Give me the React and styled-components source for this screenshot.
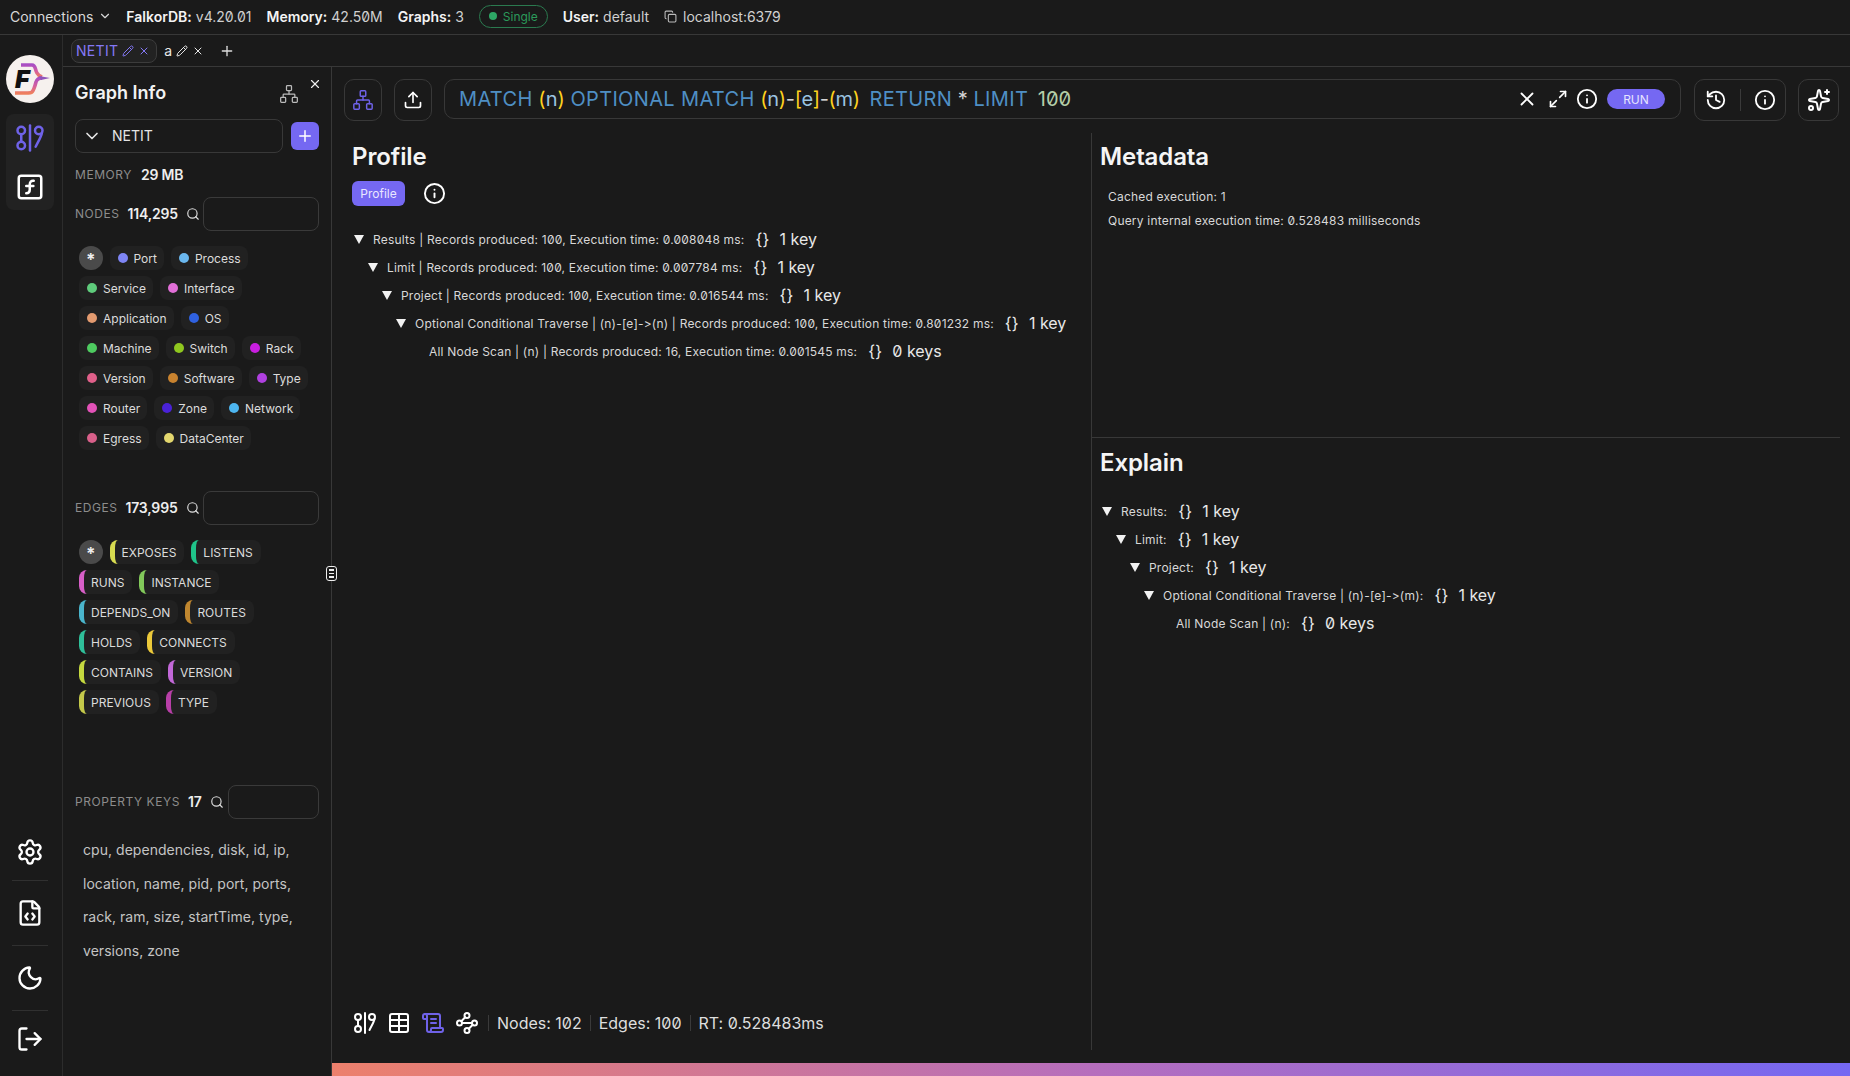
import React from 'react';
import styled, { createGlobalStyle } from 'styled-components';
import {
  ChevronDown, Copy, Pencil, X, Plus, Network, Search, Upload, Info, Maximize2, History, Sparkles,
  Settings, FileCode, Moon, LogOut, SquareFunction, Table, ScrollText, Waypoints,
} from 'lucide-react';

const GlobalStyle = createGlobalStyle`
  html, body { margin: 0; padding: 0; background: #1a1a1a; }
  body {
    font-family: Inter, "Noto Sans", sans-serif;
    font-feature-settings: "zero", "calt" 0;
    color: #fff;
  }
`;

const PURPLE = '#7568F2';
const LINE = '#383838';

const Page = styled.div`
  display: flex;
  flex-direction: column;
  width: 1850px;
  height: 1076px;
  overflow: hidden;
  background: #1a1a1a;
`;

const TopBar = styled.div`
  display: flex;
  align-items: center;
  gap: 15px;
  height: 35px;
  padding: 0 0 2px 10px;
  box-sizing: border-box;
  border-bottom: 1px solid ${LINE};
  font-size: 14px;
  color: #e0e0e0;
`;

const Connections = styled.div`
  display: flex;
  align-items: center;
  gap: 5px;
  margin-right: -1px;
  color: #d8d8d8;
`;

const Stat = styled.div`
  display: flex;
  align-items: center;
  gap: ${p => p.$gap || 4}px;
  color: #d0d0d0;
  b { font-weight: 600; color: #f4f4f4; }
`;

const SinglePill = styled.div`
  display: flex;
  align-items: center;
  gap: 6px;
  height: 23px;
  padding: 0 9px;
  box-sizing: border-box;
  border: 1px solid #2b7a4f;
  border-radius: 12px;
  font-size: 12px;
  color: #2b9a5b;
`;

const GreenDot = styled.span`
  width: 8px;
  height: 8px;
  border-radius: 50%;
  background: #2ea866;
`;

const Body = styled.div`
  display: flex;
  flex: 1;
  min-height: 0;
`;

const Rail = styled.div`
  display: flex;
  flex-direction: column;
  align-items: center;
  width: 63px;
  box-sizing: border-box;
  padding: 20px 2px 0 0;
  border-right: 1px solid #2c2c2c;
`;

const LogoCircle = styled.svg`
  width: 48px;
  height: 48px;
  display: block;
`;

const RailGroup = styled.div`
  display: flex;
  flex-direction: column;
  align-items: center;
  gap: 19px;
  width: 48px;
  height: 96px;
  margin-top: 11px;
  padding-top: 9px;
  box-sizing: border-box;
  background: #222222;
  border-radius: 8px;
`;

const RailBottom = styled.div`
  display: flex;
  flex-direction: column;
  align-items: center;
  margin-top: auto;
  padding-bottom: 21px;
`;

const RailIcon = styled.div`
  display: flex;
  align-items: center;
  justify-content: center;
  width: 36px;
  height: 32px;
  color: #fff;
  &:first-child { margin-bottom: -4px; }
  &:last-child { margin-top: -4px; }
`;

const RailSep = styled.div`
  width: 36px;
  height: 1px;
  margin: 16px 0;
  background: #303030;
`;

const Content = styled.div`
  display: flex;
  flex-direction: column;
  flex: 1;
  min-width: 0;
`;

const Tabs = styled.div`
  display: flex;
  align-items: center;
  height: 32px;
  padding-left: 8px;
  box-sizing: border-box;
  border-bottom: 1px solid ${LINE};
  font-size: 14px;
`;

const Tab = styled.div`
  display: flex;
  align-items: center;
  gap: 4px;
  height: 24px;
  padding: 0 6px 0 4px;
  box-sizing: border-box;
  border-radius: 8px;
  border: 1px solid ${p => (p.$active ? '#3c3c3c' : 'transparent')};
  background: ${p => (p.$active ? '#222222' : 'transparent')};
  color: ${p => (p.$active ? '#8478f5' : '#e8e8e8')};
  letter-spacing: 0.3px;
  margin-right: 2px;
`;

const AddTab = styled.div`
  display: flex;
  margin-left: 6px;
  color: #ddd;
`;

const Split = styled.div`
  display: flex;
  flex: 1;
  min-height: 0;
`;

const Panel = styled.div`
  position: relative;
  width: 269px;
  box-sizing: border-box;
  padding: 13px 12px 0;
  border-right: 1px solid ${LINE};
`;

const CloseBtn = styled.div`
  position: absolute;
  top: 10px;
  right: 9px;
  display: flex;
  color: #eee;
`;

const DragHandle = styled.div`
  position: absolute;
  top: 499px;
  right: -6px;
  display: flex;
  flex-direction: column;
  align-items: center;
  justify-content: center;
  gap: 2px;
  width: 11px;
  height: 15px;
  box-sizing: border-box;
  background: #1a1a1a;
  border: 1.5px solid #eee;
  border-radius: 3px;
  i { width: 5px; height: 1.5px; background: #eee; }
`;

const PanelTitle = styled.div`
  display: flex;
  align-items: center;
  justify-content: space-between;
  height: 24px;
  padding-right: 20px;
  font-size: 18px;
  font-weight: 600;
  color: #f2f2f2;
`;

const PanelIcon = styled.span`
  display: flex;
  margin-top: 4px;
  color: #bbb;
`;

const SelectRow = styled.div`
  display: flex;
  align-items: center;
  gap: 8px;
  margin-top: 15px;
`;

const GraphSelect = styled.div`
  display: flex;
  align-items: center;
  gap: 10px;
  width: 208px;
  height: 34px;
  padding: 0 0 1px 6px;
  box-sizing: border-box;
  border: 1px solid ${LINE};
  border-radius: 8px;
  font-size: 14px;
  color: #e4e4e4;
`;

const AddGraph = styled.div`
  display: flex;
  align-items: center;
  justify-content: center;
  width: 28px;
  height: 28px;
  border-radius: 6px;
  background: ${PURPLE};
  color: #fff;
`;

const MemoryRow = styled.div`
  display: flex;
  align-items: center;
  gap: 9px;
  height: 16px;
  margin-top: 14px;
  margin-bottom: 14px;
`;

const Label = styled.span`
  flex-shrink: 0;
  margin-bottom: 2px;
  font-size: 12px;
  letter-spacing: 0.55px;
  white-space: nowrap;
  color: #8c8c8c;
`;

const Count = styled.span`
  flex-shrink: 0;
  margin-bottom: 2px;
  font-size: 14px;
  font-weight: 600;
  letter-spacing: -0.2px;
  color: #eee;
`;

const Section = styled.div`
  height: 294px;
`;

const SearchRow = styled.div`
  display: flex;
  align-items: center;
  justify-content: space-between;
  height: 34px;
`;

const SearchInfo = styled.div`
  display: flex;
  align-items: center;
  gap: 8px;
  svg { flex-shrink: 0; }
`;

const SearchBox = styled.div`
  flex-shrink: 0;
  width: ${p => p.$width}px;
  height: 34px;
  box-sizing: border-box;
  border: 1px solid #3a3a3a;
  border-radius: 8px;
`;

const ChipWrap = styled.div`
  display: flex;
  flex-wrap: wrap;
  gap: 6px 7px;
  width: 234px;
  margin: 15px 0 0 4px;
`;

const AllChip = styled.div`
  display: flex;
  align-items: center;
  justify-content: center;
  width: 23.5px;
  height: 24px;
  padding-top: 4px;
  box-sizing: border-box;
  border-radius: 50%;
  background: #4a4a4a;
  font-size: 17px;
  font-weight: 700;
  color: #eee;
`;

const Chip = styled.div`
  display: flex;
  align-items: center;
  gap: 6px;
  height: 24px;
  padding: 0 7px 0 8px;
  box-sizing: border-box;
  border-radius: 8px;
  background: #212121;
  font-size: 12px;
  color: #dcdcdc;
`;

const Dot = styled.span`
  width: 10px;
  height: 10px;
  border-radius: 50%;
  background: ${p => p.$color};
`;

const EdgeChip = styled(Chip)`
  padding: 0 8px 0 7px;
  border-left: 5px solid ${p => p.$color};
`;

const KeysText = styled.div`
  width: 215px;
  margin: 14px 0 0 8px;
  font-size: 14px;
  line-height: 33.6px;
  letter-spacing: 0.04px;
  color: #c4c4c4;
`;

const Main = styled.div`
  display: flex;
  flex-direction: column;
  flex: 1;
  min-width: 0;
`;

const Toolbar = styled.div`
  display: flex;
  gap: 12px;
  height: 66px;
  padding: 12px 11px 0 12px;
  box-sizing: border-box;
`;

const ToolBtn = styled.div`
  display: flex;
  align-items: center;
  justify-content: center;
  flex-shrink: 0;
  width: ${p => p.$width || 38}px;
  height: 42px;
  box-sizing: border-box;
  border: 1px solid ${LINE};
  border-radius: 10px;
  color: ${p => p.$color || '#fff'};
`;

const QueryBar = styled.div`
  display: flex;
  align-items: center;
  flex: 1;
  height: 40px;
  padding: 0 15px 0 14px;
  box-sizing: border-box;
  border: 1px solid ${LINE};
  border-radius: 10px;
`;

const QueryText = styled.div`
  flex: 1;
  font-size: 20px;
  color: #d4d4d4;
  white-space: nowrap;
`;

const Kw = styled.span`
  color: #4f8fc4;
  letter-spacing: 0.35px;
`;
const Pattern = styled.span`
  letter-spacing: -0.3px;
  margin-right: 4px;
`;
const Br = styled.span` color: #ffd21e; `;
const Id = styled.span` color: #9cc4e0; `;
const Num = styled.span`
  margin-left: 4px;
  color: #b5cea8;
`;

const QueryActions = styled.div`
  display: flex;
  align-items: center;
  gap: 8px;
  color: #fff;
`;

const ClearIcon = styled.span`
  display: flex;
  margin-right: 2px;
`;

const RunBtn = styled.div`
  display: flex;
  align-items: center;
  justify-content: center;
  width: 58px;
  height: 20px;
  margin-left: 1px;
  border-radius: 10px;
  background: ${PURPLE};
  font-size: 12px;
  color: #e6e3ff;
`;

const DoubleBtn = styled(ToolBtn)`
  gap: 13px;
  margin-left: 1px;
  i { width: 1px; height: 22px; background: #3a3a3a; }
`;

const Workspace = styled.div`
  display: flex;
  flex: 1;
  min-height: 0;
`;

const LeftPane = styled.div`
  display: flex;
  flex-direction: column;
  flex: 1;
  padding: 10px 0 0 20px;
  box-sizing: border-box;
  min-width: 0;
`;

const RightPane = styled.div`
  display: flex;
  flex-direction: column;
  width: 759px;
  box-sizing: border-box;
  border-left: 1px solid ${LINE};
`;

const PaneTitle = styled.h2`
  margin: 0;
  font-size: 24px;
  line-height: 28px;
  font-weight: 600;
  letter-spacing: -0.1px;
  color: #f5f5f5;
`;

const ProfileRow = styled.div`
  display: flex;
  align-items: center;
  gap: 18px;
  margin-top: 10px;
  margin-bottom: 19px;
  color: #fff;
`;

const ProfileBtn = styled.div`
  display: flex;
  align-items: center;
  justify-content: center;
  width: 53px;
  height: 25px;
  border-radius: 6px;
  background: ${PURPLE};
  font-size: 12px;
  color: #e9e7ff;
`;

const TreeList = styled.div`
  margin-left: 2px;
`;

const TreeRow = styled.div`
  display: flex;
  align-items: center;
  height: 28px;
  padding-left: ${p => p.$indent}px;
  color: #d8d8d8;
  font-size: 12px;
  letter-spacing: 0.2px;
  white-space: nowrap;
`;

const Arrow = styled.span`
  width: 0;
  height: 0;
  margin-right: 9px;
  border-left: 5px solid transparent;
  border-right: 5px solid transparent;
  border-top: 9px solid #f2f2f2;
`;

const Braces = styled.span`
  margin-left: 11px;
  margin-right: 10px;
  font-size: 16px;
  color: #eaeaea;
`;

const Keys = styled.span`
  font-size: 16px;
  letter-spacing: 0;
  color: #e8e8e8;
`;

const Filler = styled.div`
  flex: 1;
`;

const Footer = styled.div`
  display: flex;
  align-items: center;
  height: 24px;
  margin-bottom: 15px;
  padding-left: 1px;
  font-size: 16px;
  color: #dedede;
`;

const FooterIcons = styled.div`
  display: flex;
  gap: 10px;
  margin-right: 1px;
`;

const FooterIcon = styled.span`
  display: flex;
  width: 24px;
  color: ${p => p.$color || '#fff'};
`;

const FooterSep = styled.span`
  width: 1px;
  height: 16px;
  margin: 0 8px;
  background: #3a3a3a;
`;

const MetaSection = styled.div`
  height: 305px;
  margin-right: 10px;
  padding: 10px 0 0 8px;
  box-sizing: border-box;
  border-bottom: 1px solid ${LINE};
`;

const MetaLine = styled.div`
  margin: 0 0 0 8px;
  height: 24px;
  line-height: 24px;
  font-size: 12px;
  letter-spacing: 0.2px;
  color: #d8d8d8;
`;

const MetaList = styled.div`
  margin-top: 14px;
`;

const ExplainSection = styled.div`
  padding: 11px 0 0 8px;
`;

const ExplainTree = styled.div`
  margin-top: 20px;
`;

const GradientBar = styled.div`
  height: 13px;
  margin-top: 13px;
  background: linear-gradient(90deg, #ec806c 0%, #b66ebd 50%, #7568f2 100%);
`;

const NODES = [
  ['Port', '#7e85f5'], ['Process', '#6ab7ee'], ['Service', '#5fcc7c'], ['Interface', '#e26fd8'],
  ['Application', '#e39a6f'], ['OS', '#2f61e0'], ['Machine', '#4ecb60'], ['Switch', '#8fc71f'],
  ['Rack', '#c81ee0'], ['Version', '#e0608a'], ['Software', '#c9832f'], ['Type', '#b040e0'],
  ['Router', '#e352b8'], ['Zone', '#4a22d8'], ['Network', '#4db6f0'], ['Egress', '#d9608a'],
  ['DataCenter', '#e3d76e'],
];

const EDGES = [
  ['EXPOSES', '#d8dc50'], ['LISTENS', '#1fc48a'], ['RUNS', '#d85fc8'], ['INSTANCE', '#82c95a'],
  ['DEPENDS_ON', '#4ab5cc'], ['ROUTES', '#c0872f'], ['HOLDS', '#2fc09a'], ['CONNECTS', '#ecc93a'],
  ['CONTAINS', '#c5d93f'], ['VERSION', '#c268d8'], ['PREVIOUS', '#c4c94a'], ['TYPE', '#b83fa8'],
];

const PROFILE_ROWS = [
  { indent: 0, text: 'Results | Records produced: 100, Execution time: 0.008048 ms:', keys: '1 key', arrow: true },
  { indent: 14, text: 'Limit | Records produced: 100, Execution time: 0.007784 ms:', keys: '1 key', arrow: true },
  { indent: 28, text: 'Project | Records produced: 100, Execution time: 0.016544 ms:', keys: '1 key', arrow: true },
  { indent: 42, text: 'Optional Conditional Traverse | (n)-[e]->(n) | Records produced: 100, Execution time: 0.801232 ms:', keys: '1 key', arrow: true },
  { indent: 75, text: 'All Node Scan | (n) | Records produced: 16, Execution time: 0.001545 ms:', keys: '0 keys' },
];

const EXPLAIN_ROWS = [
  { indent: 2, text: 'Results:', keys: '1 key', arrow: true },
  { indent: 16, text: 'Limit:', keys: '1 key', arrow: true },
  { indent: 30, text: 'Project:', keys: '1 key', arrow: true },
  { indent: 44, text: 'Optional Conditional Traverse | (n)-[e]->(m):', keys: '1 key', arrow: true },
  { indent: 76, text: 'All Node Scan | (n):', keys: '0 keys' },
];

const GraphIcon = ({ size = 24, color = 'currentColor' }) => (
  <svg width={size} height={size} viewBox="0 0 24 24" fill="none" stroke={color} strokeWidth="2" strokeLinecap="round">
    <circle cx="5" cy="6" r="3" />
    <circle cx="5" cy="18" r="3" />
    <path d="M5 9v6" />
    <path d="M12 2v20" />
    <circle cx="19" cy="6" r="3" />
    <path d="M21.5 8c-.5 3-2.5 6-5 11" />
  </svg>
);

const Logo = () => (
  <LogoCircle viewBox="0 0 48 48">
    <defs>
      <linearGradient id="logoStroke" x1="0" y1="0" x2="0" y2="1">
        <stop offset="0%" stopColor="#a94fc4" />
        <stop offset="55%" stopColor="#d65f9c" />
        <stop offset="100%" stopColor="#ee7f5e" />
      </linearGradient>
    </defs>
    <circle cx="24" cy="24" r="24" fill="#f6f1ee" />
    <path d="M15 10h11c4 0 3 5 5 8 1 2 2 3 5 4" fill="none" stroke="url(#logoStroke)" strokeWidth="3.6" />
    <path d="M36 23c-3 0-5 1-6 4-1 4-2 8-4 10-1 1-3 1-6 1H9" fill="none" stroke="url(#logoStroke)" strokeWidth="3.6" />
    <path d="M33 21l11 2-9 2z" fill="#8f54bb" />
    <text x="9" y="33" fontFamily="Inter, sans-serif" fontWeight="900" fontStyle="italic" fontSize="25" fill="#111">F</text>
  </LogoCircle>
);

const Tree = ({ rows }) => rows.map(r => (
  <TreeRow key={r.text} $indent={r.indent}>
    {r.arrow && <Arrow />}
    <span>{r.text}</span>
    <Braces>{'{}'}</Braces>
    <Keys>{r.keys}</Keys>
  </TreeRow>
));

export default function App() {
  return (
    <Page>
      <GlobalStyle />
      <TopBar>
        <Connections>Connections <ChevronDown size={14} /></Connections>
        <Stat><b>FalkorDB:</b> v4.20.01</Stat>
        <Stat><b>Memory:</b> 42.50M</Stat>
        <Stat><b>Graphs:</b> 3</Stat>
        <SinglePill><GreenDot />Single</SinglePill>
        <Stat><b>User:</b> default</Stat>
        <Stat $gap={6}><Copy size={13} color="#bbb" /> localhost:6379</Stat>
      </TopBar>
      <Body>
        <Rail>
          <Logo />
          <RailGroup>
            <GraphIcon size={30} color="#6f62e8" />
            <SquareFunction size={30} color="#fff" />
          </RailGroup>
          <RailBottom>
            <RailIcon><Settings size={28} /></RailIcon>
            <RailSep />
            <RailIcon><FileCode size={28} /></RailIcon>
            <RailSep />
            <RailIcon><Moon size={28} /></RailIcon>
            <RailSep />
            <RailIcon><LogOut size={28} /></RailIcon>
          </RailBottom>
        </Rail>
        <Content>
          <Tabs>
            <Tab $active>NETIT <Pencil size={12} /> <X size={12} /></Tab>
            <Tab>a <Pencil size={12} /> <X size={12} /></Tab>
            <AddTab><Plus size={16} /></AddTab>
          </Tabs>
          <Split>
            <Panel>
              <CloseBtn><X size={14} /></CloseBtn>
              <DragHandle><i /><i /><i /></DragHandle>
              <PanelTitle>Graph Info <PanelIcon><Network size={20} strokeWidth={1.5} /></PanelIcon></PanelTitle>
              <SelectRow>
                <GraphSelect><ChevronDown size={20} />NETIT</GraphSelect>
                <AddGraph><Plus size={18} /></AddGraph>
              </SelectRow>
              <MemoryRow><Label>MEMORY</Label><Count>29 MB</Count></MemoryRow>
              <Section>
                <SearchRow>
                  <SearchInfo>
                    <Label>NODES</Label><Count>114,295</Count>
                    <Search size={14} color="#ddd" />
                  </SearchInfo>
                  <SearchBox $width={116} />
                </SearchRow>
                <ChipWrap>
                  <AllChip>*</AllChip>
                  {NODES.map(([name, color]) => <Chip key={name}><Dot $color={color} />{name}</Chip>)}
                </ChipWrap>
              </Section>
              <Section>
                <SearchRow>
                  <SearchInfo>
                    <Label>EDGES</Label><Count>173,995</Count>
                    <Search size={14} color="#ddd" />
                  </SearchInfo>
                  <SearchBox $width={116} />
                </SearchRow>
                <ChipWrap>
                  <AllChip>*</AllChip>
                  {EDGES.map(([name, color]) => <EdgeChip key={name} $color={color}>{name}</EdgeChip>)}
                </ChipWrap>
              </Section>
              <div>
                <SearchRow>
                  <SearchInfo>
                    <Label>PROPERTY KEYS</Label><Count>17</Count>
                    <Search size={14} color="#ddd" />
                  </SearchInfo>
                  <SearchBox $width={91} />
                </SearchRow>
                <KeysText>cpu, dependencies, disk, id, ip, location, name, pid, port, ports, rack, ram, size, startTime, type, versions, zone</KeysText>
              </div>
            </Panel>
            <Main>
              <Toolbar>
                <ToolBtn $color="#6f62e8"><Network size={22} strokeWidth={1.6} /></ToolBtn>
                <ToolBtn><Upload size={20} /></ToolBtn>
                <QueryBar>
                  <QueryText>
                    <Kw>MATCH</Kw> <Br>(</Br><Id>n</Id><Br>)</Br> <Kw>OPTIONAL MATCH</Kw> <Pattern><Br>(</Br><Id>n</Id><Br>)</Br>-<Br>[</Br><Id>e</Id><Br>]</Br>-<Br>(</Br><Id>m</Id><Br>)</Br></Pattern> <Kw>RETURN</Kw> * <Kw>LIMIT</Kw> <Num>100</Num>
                  </QueryText>
                  <QueryActions>
                    <ClearIcon><X size={22} /></ClearIcon>
                    <Maximize2 size={20} />
                    <Info size={22} />
                    <RunBtn>RUN</RunBtn>
                  </QueryActions>
                </QueryBar>
                <DoubleBtn $width={92}><History size={22} /><i /><Info size={22} /></DoubleBtn>
                <ToolBtn $width={41}><Sparkles size={24} /></ToolBtn>
              </Toolbar>
              <Workspace>
                <LeftPane>
                  <PaneTitle>Profile</PaneTitle>
                  <ProfileRow>
                    <ProfileBtn>Profile</ProfileBtn>
                    <Info size={23} />
                  </ProfileRow>
                  <TreeList><Tree rows={PROFILE_ROWS} /></TreeList>
                  <Filler />
                  <Footer>
                    <FooterIcons>
                      <FooterIcon><GraphIcon size={24} /></FooterIcon>
                      <FooterIcon><Table size={24} /></FooterIcon>
                      <FooterIcon $color="#6f62e8"><ScrollText size={24} /></FooterIcon>
                      <FooterIcon><Waypoints size={24} /></FooterIcon>
                    </FooterIcons>
                    <FooterSep />
                    <span>Nodes: 102</span>
                    <FooterSep />
                    <span>Edges: 100</span>
                    <FooterSep />
                    <span>RT: 0.528483ms</span>
                  </Footer>
                </LeftPane>
                <RightPane>
                  <MetaSection>
                    <PaneTitle>Metadata</PaneTitle>
                    <MetaList>
                      <MetaLine>Cached execution: 1</MetaLine>
                      <MetaLine>Query internal execution time: 0.528483 milliseconds</MetaLine>
                    </MetaList>
                  </MetaSection>
                  <ExplainSection>
                    <PaneTitle>Explain</PaneTitle>
                    <ExplainTree><Tree rows={EXPLAIN_ROWS} /></ExplainTree>
                  </ExplainSection>
                </RightPane>
              </Workspace>
              <GradientBar />
            </Main>
          </Split>
        </Content>
      </Body>
    </Page>
  );
}
